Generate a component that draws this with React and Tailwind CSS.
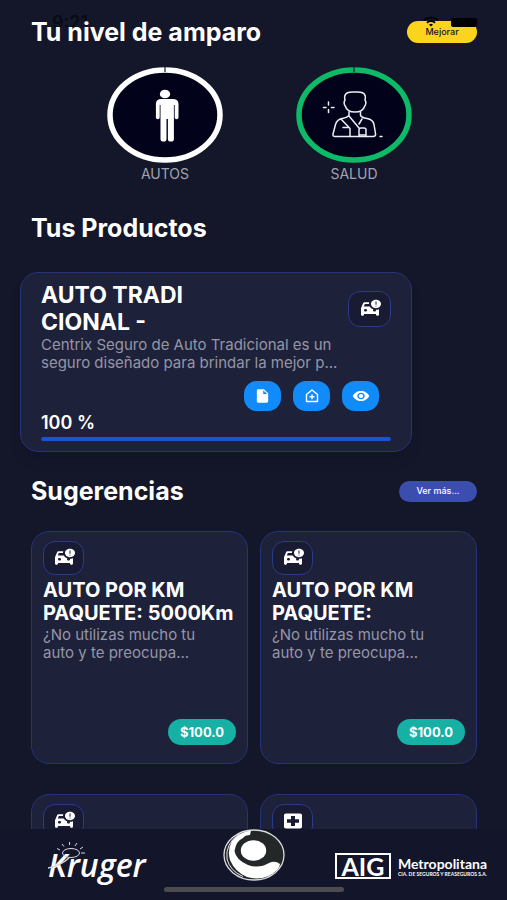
import { MdCarCrash, MdInsertDriveFile, MdLocalHospital, MdRemoveRedEye, MdWifi } from 'react-icons/md';

const products = [
  {
    title: ['AUTO TRADI', 'CIONAL -'],
    desc: ['Centrix Seguro de Auto Tradicional es un', 'seguro diseñado para brindar la mejor p...'],
    progress: 100,
  },
];

const suggestions = [
  { id: 1, icon: MdCarCrash, title: ['AUTO POR KM', 'PAQUETE: 5000Km'], desc: ['¿No utilizas mucho tu', 'auto y te preocupa...'], price: '$100.0' },
  { id: 2, icon: MdCarCrash, title: ['AUTO POR KM', 'PAQUETE:'], desc: ['¿No utilizas mucho tu', 'auto y te preocupa...'], price: '$100.0' },
  { id: 3, icon: MdCarCrash, title: [], desc: [] },
  { id: 4, icon: MdLocalHospital, title: [], desc: [] },
];

function StatusBar() {
  return (
    <div className="absolute inset-x-0 top-0 flex justify-between pl-[52px] pr-[30px] pt-[14px] text-[#080a14] pointer-events-none">
      <span className="text-[18px] leading-[18px] font-semibold">9:21</span>
      <div className="z-10 flex items-start gap-3">
        <MdWifi className="h-[15px] w-4 text-black" preserveAspectRatio="none" />
        <span className="mt-1 h-[9px] w-[26px] rounded-xs bg-black" />
      </div>
    </div>
  );
}

function Gauge({ label, color, children }) {
  return (
    <div className="flex flex-col items-center">
      <svg viewBox="0 0 116 96" className="h-24 w-[116px]" fill="none" stroke="#fff">
        <ellipse cx="58" cy="48" rx="55" ry="45" fill="#02021a" stroke={color} strokeWidth="5.5" />
        <path d="M58 0v5" stroke="#14172a" strokeWidth="1.2" />
        {children}
      </svg>
      <span className="mt-px text-sm leading-5 text-[#a2a3b1]">{label}</span>
    </div>
  );
}

function ManIcon() {
  return (
    <g fill="#fff" stroke="none">
      <ellipse cx="58" cy="27" rx="5.2" ry="4.3" />
      <path d="M50.500 32h15q6 0 6 5v13.500q0 1.800-1.900 1.800t-1.900-1.800V38h-.8v34q0 2.600-3 2.600t-3-2.600V52h-1.400v20q0 2.600-3 2.600t-3-2.600V38h-.8v12.500q0 1.800-1.900 1.800t-1.900-1.800V37q0-5 5.600-5z" />
    </g>
  );
}

function PatientIcon() {
  return (
    <g stroke="#eeeef6" strokeWidth="1.500" strokeLinecap="round" strokeLinejoin="round">
      <path d="M49 33q-2-8 7-8h6q9 0 7 8 2 3-.5 6.500-1.500 5.500-9.500 5.500t-9.500-5.500q-2.500-3.500-.5-6.500z" />
      <path d="M53 45v3q-1 2.500-7 3.500-5 1-6.500 6L37 67q-.5 2.500 2 2.500h38q3 0 2.500-3l-1.500-9q-1-5-7-6t-6.500-3.500v-3" />
      <path d="M45 52l9 9.500v8M53 49l10 12M63 69.500V63q0-2 2-2h3q2 0 2 2v6.500M66 52l-3 5M47 60.500h6M63 68h7" />
      <path d="M32.500 35v3M32.500 42.500v3M27.500 40.500H30M35.500 40.500H38M84 69.500h2" />
    </g>
  );
}

function HomePlusIcon() {
  return (
    <svg viewBox="0 0 16 16" className="h-4 w-4" fill="none" stroke="#fff" strokeWidth="1.400" strokeLinejoin="round">
      <path d="M2.500 6.500L8 2l5.500 4.500v7h-11zM8 6.200v5M5.500 8.700h5" />
    </svg>
  );
}

function IconBox({ icon: Icon, className }) {
  return (
    <span className={`flex shrink-0 items-center justify-center rounded-xl border border-[#2b3b88] bg-[#181b31] text-white ${className}`}>
      <Icon className="h-5 w-6" preserveAspectRatio="none" />
    </span>
  );
}

function ActionButton({ label, children }) {
  return (
    <button aria-label={label} className="flex h-[30px] w-[37px] items-center justify-center rounded-[13px] bg-[#118bfa] text-white">
      {children}
    </button>
  );
}

function ProductCard({ title, desc, progress }) {
  return (
    <article className="mr-[95px] ml-5 rounded-[18px] border border-[#263376] bg-[#1e213a] px-5 pt-[9px] pb-2.5 shadow-lg">
      <div className="flex items-center justify-between">
        <h3 className="text-[23px] leading-[27px] font-bold text-white">
          {title.map(line => <span key={line} className="block">{line}</span>)}
        </h3>
        <IconBox icon={MdCarCrash} className="h-9 w-[43px]" />
      </div>
      <p className="text-[15px] leading-[18px] whitespace-nowrap text-[#9596a6]">
        {desc.map(line => <span key={line} className="block">{line}</span>)}
      </p>
      <div className="mt-[9px] mr-3 flex justify-end gap-3">
        <ActionButton label="Documento"><MdInsertDriveFile className="h-4 w-[17px]" preserveAspectRatio="none" /></ActionButton>
        <ActionButton label="Asistencia"><HomePlusIcon /></ActionButton>
        <ActionButton label="Ver"><MdRemoveRedEye className="h-4 w-[18px]" preserveAspectRatio="none" /></ActionButton>
      </div>
      <p className="text-[18px] leading-6 font-semibold text-white">{progress} %</p>
      <div className="mt-0.5 h-1 rounded-full bg-[#14172a]">
        <div className="h-full rounded-full bg-[#1854d8]" style={{ width: `${progress}%` }} />
      </div>
    </article>
  );
}

function SuggestionCard({ icon, title, desc, price }) {
  return (
    <article className="flex min-h-[233px] flex-col rounded-[18px] border border-[#263376] bg-[#1e213a] px-[11px] pt-[9px] pb-[18px]">
      <IconBox icon={icon} className="h-[34px] w-[41px]" />
      <h3 className="mt-1 text-[20px] leading-[23px] font-bold whitespace-nowrap text-white">
        {title.map(line => <span key={line} className="block">{line}</span>)}
      </h3>
      <p className="mt-px text-[15px] leading-[18px] whitespace-nowrap text-[#9596a6]">
        {desc.map(line => <span key={line} className="block">{line}</span>)}
      </p>
      {price && (
        <span className="mt-auto self-end rounded-full bg-[#16b0a4] px-3 text-[13px] leading-[26px] font-bold text-white">{price}</span>
      )}
    </article>
  );
}

function KrugerLogo() {
  return (
    <div className="relative w-[100px]">
      <span className="block text-[32px] leading-9 font-semibold text-white italic" style={{ fontFamily: "'Open Sans', sans-serif" }}>Kruger</span>
      <svg viewBox="0 0 52 32" className="absolute -top-1.5 left-0 h-8 w-13" fill="none" stroke="#d5d6df" strokeWidth="1">
        <ellipse cx="23" cy="12" rx="8.500" ry="4.500" />
        <path d="M12 9l-3-1.500M16 5.500L14 3M21.500 4V1M27 5l2-3M32 8l3-2M33 12h4" />
        <path d="M0 27Q12 25 21 17" strokeWidth="1.500" />
      </svg>
    </div>
  );
}

function AvatarLogo() {
  return (
    <svg viewBox="0 0 62 52" className="h-[52px] w-[62px]">
      <ellipse cx="31" cy="26" rx="30" ry="25" fill="#242728" stroke="#dcdce0" strokeWidth="1.300" />
      <path d="M28 1.500Q16 3 9 12 4 21 7 31 12 43 24 48 42 53 54 41 57 38 57 35 52 31 46 34 36 40 25 36 13 31 11.500 22 13 12 20 9 22 6 27 6z" fill="#fff" />
      <path d="M16 5Q2 15 4 30 7 42 20 47.500" fill="none" stroke="#e6e6ea" strokeWidth="1" />
      <ellipse cx="30.500" cy="21.500" rx="12.700" ry="10.300" fill="#fff" />
    </svg>
  );
}

function AigLogo() {
  return (
    <div className="flex items-center gap-[7px] text-white" style={{ fontFamily: 'Lato, sans-serif' }}>
      <span className="flex h-[26px] w-14 items-center justify-center border-2 border-white text-[25px] leading-5 font-bold">AIG</span>
      <span className="flex flex-col">
        <span className="text-sm leading-[15px] font-bold">Metropolitana</span>
        <span className="text-[5px] leading-[6px] font-bold whitespace-nowrap">CIA. DE SEGUROS Y REASEGUROS S.A.</span>
      </span>
    </div>
  );
}

export default function App() {
  return (
    <div className="relative flex h-screen flex-col overflow-hidden bg-[#14172a]" style={{ fontFamily: 'Inter, sans-serif' }}>
      <StatusBar />

      <main className="relative min-h-0 flex-1 overflow-y-auto [scrollbar-width:none]">
        <header className="flex items-center justify-between pt-4 pr-[30px] pl-[31px]">
          <h1 className="text-[25px] leading-8 font-bold text-white">Tu nivel de amparo</h1>
          <button className="h-[22px] w-[70px] rounded-full bg-[#fbd51c] text-[9px] font-medium text-[#14172a]">Mejorar</button>
        </header>

        <div className="mt-[19px] flex justify-center gap-[73px] pl-3">
          <Gauge label="AUTOS" color="#fff"><ManIcon /></Gauge>
          <Gauge label="SALUD" color="#0cba67"><PatientIcon /></Gauge>
        </div>

        <section className="mt-7">
          <h2 className="mb-7 pl-[31px] text-[25px] leading-8 font-bold text-white">Tus Productos</h2>
          {products.map(p => <ProductCard key={p.title[0]} {...p} />)}
        </section>

        <section className="mt-[23px] pr-[30px] pl-[31px]">
          <div className="mb-6 flex items-center justify-between">
            <h2 className="text-[25px] leading-8 font-bold text-white">Sugerencias</h2>
            <button className="h-[21px] w-[78px] rounded-full bg-[#3b4eae] text-[9px] font-medium text-white">Ver más...</button>
          </div>
          <div className="grid grid-cols-2 gap-x-3 gap-y-[30px]">
            {suggestions.map(s => <SuggestionCard key={s.id} {...s} />)}
          </div>
        </section>
      </main>

      {/* FOOTER */}
      <footer className="relative h-[71px] shrink-0 bg-[#13152a]">
        <div className="grid grid-cols-[1fr_auto_1fr] px-5">
          <div className="pt-[18px] pl-7"><KrugerLogo /></div>
          <AvatarLogo />
          <div className="flex justify-end pt-5"><AigLogo /></div>
        </div>
        <span className="absolute bottom-2 left-1/2 h-[5px] w-[180px] -translate-x-1/2 rounded-full bg-[#4b4b50]" />
      </footer>
    </div>
  );
}
